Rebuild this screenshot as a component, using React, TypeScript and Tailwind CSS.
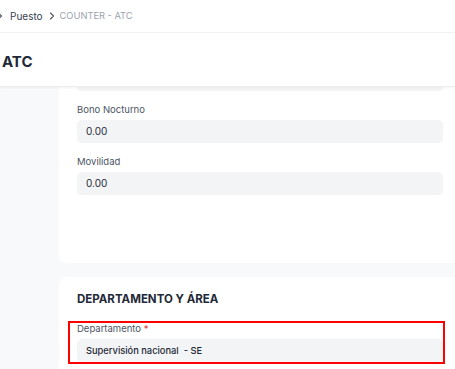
import React from "react";

function Chevron() {
  return (
    <svg width="6" height="8" viewBox="0 0 6 8" fill="none" className="shrink-0">
      <path d="M1.5 1 L4.5 4 L1.5 7" stroke="#4b5563" strokeWidth="1.1" strokeLinecap="round" strokeLinejoin="round" />
    </svg>
  );
}

function Field({ label, value, required }: { label: string; value: string; required?: boolean }) {
  return (
    <div className="flex flex-col">
      <div className="h-[12px] leading-[12px] text-[9.5px] text-[#4b5563]">
        {label}
        {required && <span className="text-[#e03636]"> *</span>}
      </div>
      <div className="mt-[4px] h-[23px] w-[366px] rounded-[5px] bg-[#f3f4f6] flex items-center pl-[9px] text-[10px] text-[#1f2937]">
        {value}
      </div>
    </div>
  );
}

export default function App() {
  return (
    <div className="w-[455px] h-[369px] overflow-hidden bg-[#f8f9fa] font-['Inter',sans-serif]">
      <header className="relative z-10 bg-white border-b border-[#eceeef] shadow-[0_1px_2px_rgba(0,0,0,0.05)]">
        <div className="h-[33px] border-b border-[#f1f2f3] flex items-center -ml-[3px]">
          <Chevron />
          <span className="ml-[7px] text-[10px] text-[#374151]">Puesto</span>
          <span className="ml-[6px]"><Chevron /></span>
          <span className="ml-[5px] text-[9.3px] text-[#9ca3af]">COUNTER - ATC</span>
        </div>
        <div className="h-[53px] flex items-center pl-[2px] pt-[3px]">
          <h1 className="text-[15px] font-bold text-[#1f2937] leading-none">ATC</h1>
        </div>
      </header>
      <div className="flex">
        <div className="w-[59px] shrink-0" />
        <div className="flex flex-col gap-[14px]">
          <div className="w-[410px] h-[176px] bg-white rounded-b-[8px] pl-[18px] flex flex-col">
            <div className="h-[4px] w-[366px] rounded-b-[5px] bg-[#f3f4f6]" />
            <div className="mt-[13px]">
              <Field label="Bono Nocturno" value="0.00" />
            </div>
            <div className="mt-[13px]">
              <Field label="Movilidad" value="0.00" />
            </div>
          </div>
          <div className="w-[410px] h-[120px] bg-white rounded-[8px] pl-[9px] pt-[14px] flex flex-col">
            <h2 className="pl-[9px] h-[16px] leading-[16px] text-[11.5px] font-bold text-[#1f2937]">
              DEPARTAMENTO Y ÁREA
            </h2>
            <div className="mt-[14px] w-[377px] h-[43px] border-2 border-[#ff0000] pl-[7px]">
              <div className="h-[12px] leading-[12px] text-[9.5px] text-[#4b5563]">
                Departamento<span className="text-[#e03636]"> *</span>
              </div>
              <div className="mt-[4px] h-[23px] w-[366px] rounded-[5px] bg-[#f3f4f6] flex items-center pl-[9px] text-[9.3px] font-medium text-[#1f2937]">
                Supervisión nacional&nbsp; - SE
              </div>
            </div>
          </div>
        </div>
      </div>
    </div>
  );
}
